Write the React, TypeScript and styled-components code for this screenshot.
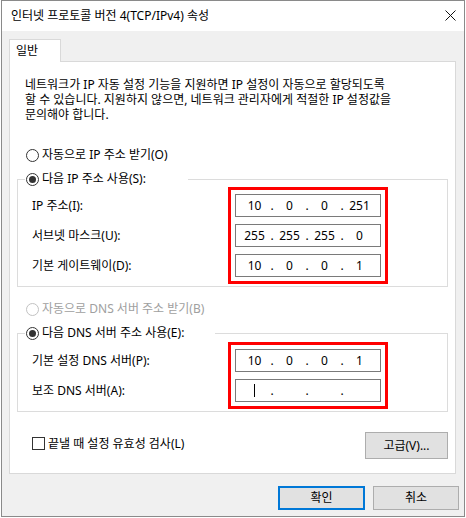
import React from 'react';
import styled, { createGlobalStyle } from 'styled-components';

const GlobalStyle = createGlobalStyle`
  html, body { margin: 0; padding: 0; background: #ffffff; }
  body {
    font-family: "Noto Sans", "Noto Sans CJK KR", sans-serif;
    font-size: 12px;
    color: #000;
  }
  * { box-sizing: border-box; }
`;

const Window = styled.div`
  margin-left: 1px;
  width: 464px;
  height: 517px;
  border: 1px solid #8a8a8a;
  background: #f0f0f0;
  display: flex;
  flex-direction: column;
`;

const TitleBar = styled.div`
  height: 30px;
  padding: 0 8px 1px 9px;
  background: #ffffff;
  display: flex;
  align-items: center;
  justify-content: space-between;
  flex-shrink: 0;
`;

const TitleText = styled.span`
  line-height: 16px;
  white-space: nowrap;
`;

const TabStrip = styled.div`
  margin: 8px 0 0 7px;
  display: flex;
`;

const Tab = styled.div`
  position: relative;
  z-index: 1;
  width: 52px;
  height: 23px;
  margin-bottom: -1px;
  padding-left: 6px;
  background: #ffffff;
  border: 1px solid #d9d9d9;
  border-bottom: none;
  display: flex;
  align-items: center;
  line-height: 16px;
`;

const Panel = styled.div`
  margin: 0 8px 0 7px;
  height: 413px;
  background: #ffffff;
  border: 1px solid #d9d9d9;
  display: flex;
  flex-direction: column;
  padding-top: 15px;
`;

const Description = styled.p`
  margin: 0 0 0 15px;
  line-height: 15px;
  white-space: nowrap;
`;

const OptionRow = styled.label<{ $top: number; $disabled?: boolean }>`
  margin: ${(p) => p.$top}px 0 0 16px;
  height: 16px;
  display: flex;
  align-items: center;
  gap: 3px;
  line-height: 16px;
  color: ${(p) => (p.$disabled ? '#a0a0a0' : '#000')};
`;

const Radio = styled.span<{ $checked?: boolean; $disabled?: boolean }>`
  width: 13px;
  height: 13px;
  border-radius: 50%;
  border: 1px solid ${(p) => (p.$disabled ? '#c2c2c2' : '#333333')};
  background: #ffffff;
  display: flex;
  align-items: center;
  justify-content: center;
  flex-shrink: 0;
  &::after {
    content: '';
    display: ${(p) => (p.$checked ? 'block' : 'none')};
    width: 7px;
    height: 7px;
    border-radius: 50%;
    background: #333333;
  }
`;

const GroupBox = styled.fieldset<{ $top: number; $padTop: number; $padBottom: number }>`
  margin: ${(p) => p.$top}px 0 0 7px;
  width: 431px;
  min-width: 0;
  padding: ${(p) => p.$padTop}px 0 ${(p) => p.$padBottom}px 0;
  border: 1px solid #dcdcdc;
  display: grid;
  grid-template-columns: 210px 160px;
`;

const Legend = styled.legend<{ $width: number }>`
  margin-left: 7px;
  padding: 0 0 0 1px;
  width: ${(p) => p.$width}px;
  height: 16px;
  display: flex;
  align-items: center;
  gap: 3px;
  line-height: 16px;
  white-space: nowrap;
`;

const Labels = styled.div`
  padding: 7px 0 0 14px;
  display: flex;
  flex-direction: column;
  gap: 7px;
`;

const FieldLabel = styled.div`
  height: 23px;
  line-height: 23px;
  white-space: nowrap;
`;

const Highlight = styled.div`
  width: 160px;
  border: 3px solid #ff0000;
  padding: 4px;
  display: flex;
  flex-direction: column;
  gap: 7px;
`;

const IpBox = styled.div`
  width: 146px;
  height: 23px;
  border: 1px solid #7a7a7a;
  background: #ffffff;
  padding-left: 4px;
  display: flex;
  align-items: center;
`;

const Octet = styled.span`
  width: 29px;
  text-align: center;
  line-height: 16px;
  display: flex;
  justify-content: center;
`;

const Dot = styled.span`
  width: 6px;
  text-align: center;
  line-height: 16px;
`;

const Caret = styled.span`
  width: 1px;
  height: 13px;
  background: #000;
  display: block;
`;

const BottomRow = styled.div`
  margin: 20px 7px 0 22px;
  display: flex;
  align-items: center;
  justify-content: space-between;
`;

const CheckLabel = styled.label`
  display: flex;
  align-items: center;
  gap: 3px;
  line-height: 16px;
  margin-top: -4px;
`;

const CheckBox = styled.span`
  width: 13px;
  height: 13px;
  border: 1px solid #333333;
  background: #ffffff;
  flex-shrink: 0;
`;

const Button = styled.button<{ $w: number; $h: number; $default?: boolean }>`
  width: ${(p) => p.$w}px;
  height: ${(p) => p.$h}px;
  padding: 0;
  background: #e1e1e1;
  border: ${(p) => (p.$default ? '2px solid #0078d7' : '1px solid #adadad')};
  font-family: inherit;
  font-size: 12px;
  color: #000;
  line-height: 16px;
`;

const Footer = styled.div`
  margin-top: 12px;
  padding-right: 5px;
  display: flex;
  justify-content: flex-end;
  gap: 8px;
`;

type Ip = (string | null)[];

const IpField: React.FC<{ value: Ip; caret?: boolean }> = ({ value, caret }) => (
  <IpBox>
    {value.map((v, i) => (
      <React.Fragment key={i}>
        {i > 0 && <Dot>.</Dot>}
        <Octet>{caret && i === 0 ? <Caret /> : v}</Octet>
      </React.Fragment>
    ))}
  </IpBox>
);

const CloseIcon = () => (
  <svg width="11" height="11" viewBox="0 0 11 11">
    <path d="M0.5 0.5 L10.5 10.5 M10.5 0.5 L0.5 10.5" stroke="#111" strokeWidth="1" fill="none" />
  </svg>
);

export default function App() {
  return (
    <>
      <GlobalStyle />
      <Window>
        <TitleBar>
          <TitleText>인터넷 프로토콜 버전 4(TCP/IPv4) 속성</TitleText>
          <CloseIcon />
        </TitleBar>
        <TabStrip>
          <Tab>일반</Tab>
        </TabStrip>
        <Panel>
          <Description>
            네트워크가 IP 자동 설정 기능을 지원하면 IP 설정이 자동으로 할당되도록
            <br />
            할 수 있습니다. 지원하지 않으면, 네트워크 관리자에게 적절한 IP 설정값을
            <br />
            문의해야 합니다.
          </Description>

          <OptionRow $top={25}>
            <Radio />
            자동으로 IP 주소 받기(O)
          </OptionRow>

          <GroupBox $top={8} $padTop={0} $padBottom={2}>
            <Legend $width={163}>
              <Radio $checked />
              다음 IP 주소 사용(S):
            </Legend>
            <Labels>
              <FieldLabel>IP 주소(I):</FieldLabel>
              <FieldLabel>서브넷 마스크(U):</FieldLabel>
              <FieldLabel>기본 게이트웨이(D):</FieldLabel>
            </Labels>
            <Highlight>
              <IpField value={['10', '0', '0', '251']} />
              <IpField value={['255', '255', '255', '0']} />
              <IpField value={['10', '0', '0', '1']} />
            </Highlight>
          </GroupBox>

          <OptionRow $top={14} $disabled>
            <Radio $disabled />
            자동으로 DNS 서버 주소 받기(B)
          </OptionRow>

          <GroupBox $top={8} $padTop={1} $padBottom={2}>
            <Legend $width={190}>
              <Radio $checked />
              다음 DNS 서버 주소 사용(E):
            </Legend>
            <Labels>
              <FieldLabel>기본 설정 DNS 서버(P):</FieldLabel>
              <FieldLabel>보조 DNS 서버(A):</FieldLabel>
            </Labels>
            <Highlight>
              <IpField value={['10', '0', '0', '1']} />
              <IpField value={[null, null, null, null]} caret />
            </Highlight>
          </GroupBox>

          <BottomRow>
            <CheckLabel>
              <CheckBox />
              끝낼 때 설정 유효성 검사(L)
            </CheckLabel>
            <Button $w={83} $h={27}>고급(V)...</Button>
          </BottomRow>
        </Panel>
        <Footer>
          <Button $w={87} $h={24} $default>확인</Button>
          <Button $w={86} $h={24}>취소</Button>
        </Footer>
      </Window>
    </>
  );
}
